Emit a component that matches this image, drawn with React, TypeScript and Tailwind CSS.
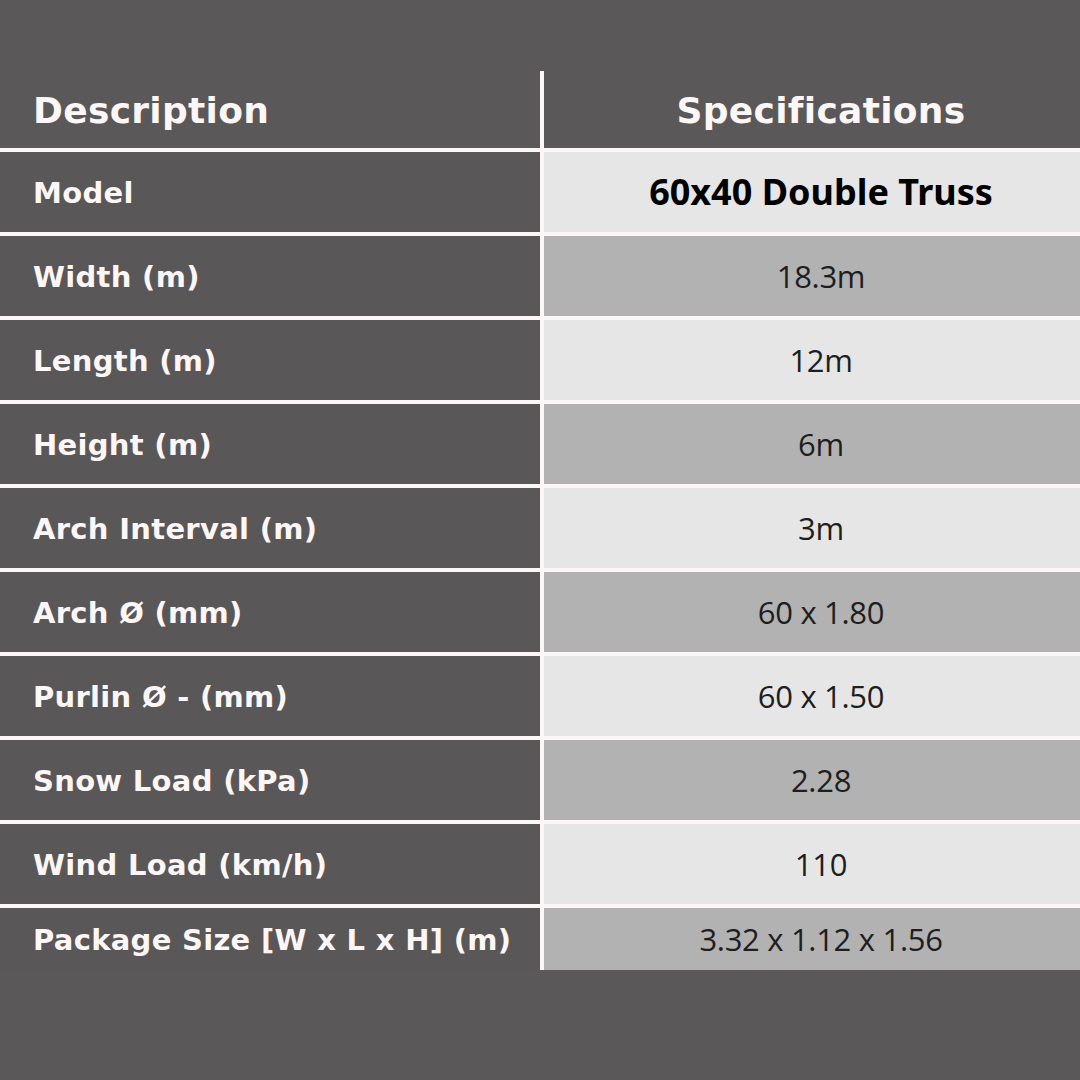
const rows: [string, string][] = [
  ['Model', '60x40 Double Truss'],
  ['Width (m)', '18.3m'],
  ['Length (m)', '12m'],
  ['Height (m)', '6m'],
  ['Arch Interval (m)', '3m'],
  ['Arch Ø (mm)', '60 x 1.80'],
  ['Purlin Ø - (mm)', '60 x 1.50'],
  ['Snow Load (kPa)', '2.28'],
  ['Wind Load (km/h)', '110'],
  ['Package Size [W x L x H] (m)', '3.32 x 1.12 x 1.56']
];

export default function App() {
  return (
    <div className="h-[1080px] w-[1080px] overflow-hidden bg-[#5a5858] pt-[71px] font-['Open_Sans',sans-serif]">
      <div className="grid grid-cols-[540px_4px_536px] bg-[#fdf6f6]">
        <div className="flex h-[77px] items-center bg-[#5a5858] pl-[33px] pt-[2px] font-['DejaVu_Sans',sans-serif] text-[36px] font-bold tracking-[0.3px] text-[#fdf6f6]">
          Description
        </div>
        <div />
        <div className="flex h-[77px] items-center justify-center bg-[#5a5858] pl-[18px] pt-[2px] font-['DejaVu_Sans',sans-serif] text-[36px] font-bold tracking-[0.3px] text-[#fdf6f6]">
          Specifications
        </div>

        {rows.map(([label, value], i) => {
          const last = i === rows.length - 1;
          const light = i % 2 === 0;
          return (
            <div key={label} className="contents">
              <div
                className={`mt-[4px] flex items-center bg-[#595757] pl-[33px] pt-[3px] font-['DejaVu_Sans',sans-serif] text-[29px] font-bold tracking-[0.3px] text-[#fdf6f6] ${last ? 'h-[62px]' : 'h-[80px]'}`}
              >
                {label}
              </div>
              <div className="mt-[4px]" />
              <div
                className={`mt-[4px] flex items-center justify-center pl-[18px] text-[#1e1e1e] ${last ? 'h-[62px]' : 'h-[80px]'} ${light ? 'bg-[#e6e6e6]' : 'bg-[#b2b2b2]'} ${i === 0 ? "font-['Noto_Sans',sans-serif] text-[36px] font-bold text-black" : 'text-[31px] font-normal tracking-[-0.3px]'}`}
              >
                {value}
              </div>
            </div>
          );
        })}
      </div>
    </div>
  );
}
